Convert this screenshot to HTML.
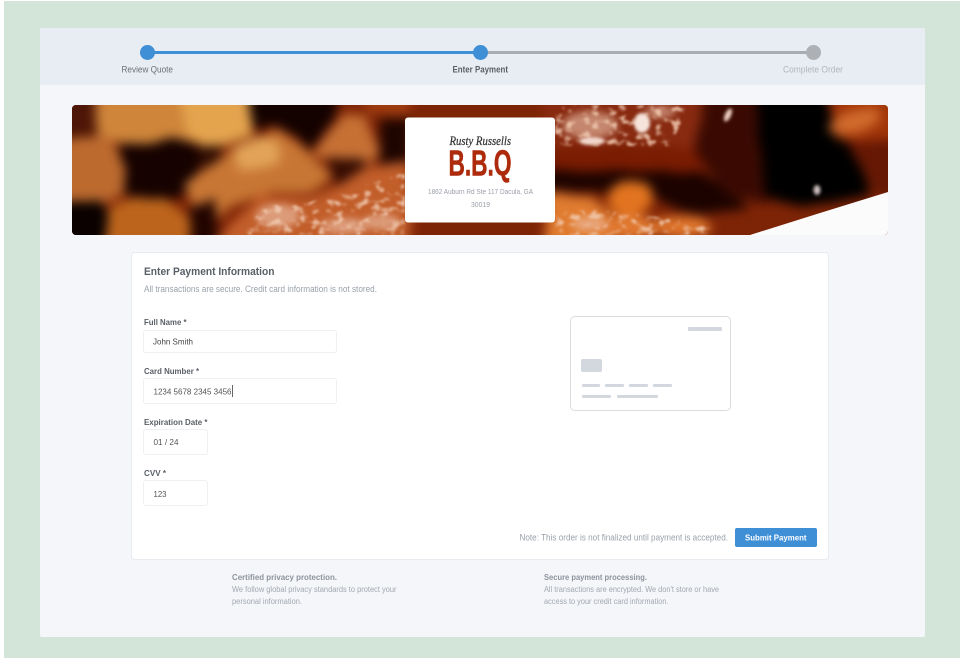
<!DOCTYPE html>
<html lang="en"><head><meta charset="utf-8"><title>Enter Payment</title>
<style>
html,body{margin:0;padding:0;width:960px;height:664px;overflow:hidden;background:#fff;font-family:"Liberation Sans",sans-serif}
div{position:absolute;box-sizing:border-box}
.in{background:#fff;border:1px solid #eef0f3;border-radius:3px}
.g{background:#d3d8de;border-radius:1px}
svg{position:absolute;left:0;top:0}
text{font-family:"Liberation Sans",sans-serif}
</style></head><body>
<div style="left:4px;top:1px;width:956px;height:657px;background:#d3e5d9"></div>
<div style="left:40px;top:28px;width:885px;height:609px;background:#f4f6f9;border-radius:2px"></div>
<div style="left:40px;top:28px;width:885px;height:57px;background:#e8edf3;border-radius:2px 2px 0 0"></div>
<div style="left:147px;top:50.5px;width:333px;height:3px;background:#3f8fd6"></div>
<div style="left:480px;top:50.5px;width:333px;height:3px;background:#a9adb2"></div>
<div style="left:139.5px;top:44.5px;width:15px;height:15px;border-radius:50%;background:#3f8fd6"></div>
<div style="left:472.5px;top:44.5px;width:15px;height:15px;border-radius:50%;background:#3f8fd6"></div>
<div style="left:805.5px;top:44.5px;width:15px;height:15px;border-radius:50%;background:#adb0b5"></div>

<svg width="960" height="664" viewBox="0 0 960 664">
<defs>
<clipPath id="c"><rect x="72" y="105" width="816" height="130" rx="4"/></clipPath>
<filter id="org" filterUnits="userSpaceOnUse" x="40" y="80" width="880" height="180" color-interpolation-filters="sRGB">
<feTurbulence type="fractalNoise" baseFrequency=".03" numOctaves="1" seed="7" result="n"/>
<feDisplacementMap in="SourceGraphic" in2="n" scale="10" xChannelSelector="R" yChannelSelector="G" result="d"/>
<feGaussianBlur in="d" stdDeviation="5.5"/>
</filter>
<filter id="sp" filterUnits="userSpaceOnUse" x="40" y="80" width="880" height="180" color-interpolation-filters="sRGB">
<feTurbulence type="fractalNoise" baseFrequency=".11 .15" numOctaves="2" seed="4" result="n"/>
<feColorMatrix in="n" type="matrix" values="0 0 0 0 .95  0 0 0 0 .80  0 0 0 0 .70  5 0 0 0 -2.6"/>
<feComposite in2="SourceAlpha" operator="in"/>
<feGaussianBlur stdDeviation="1"/>
</filter>
<filter id="b2" x="-50%" y="-50%" width="200%" height="200%"><feGaussianBlur stdDeviation="1.5"/></filter>
<filter id="b4" filterUnits="userSpaceOnUse" x="40" y="80" width="880" height="180"><feGaussianBlur stdDeviation="4"/></filter>
</defs>
<g clip-path="url(#c)">
<rect x="72" y="105" width="816" height="130" fill="#7a2206"/>
<g filter="url(#org)">
<rect x="50" y="85" width="860" height="170" fill="#7e2406"/>
<rect x="50" y="85" width="55" height="55" fill="#4e1606"/>
<polygon points="95,95 190,95 192,145 125,147 98,140" fill="#cf853a"/>
<polygon points="118,146 170,138 199,146 199,194 165,202 122,196" fill="#160200"/>
<polygon points="178,90 256,90 252,136 215,150 190,140" fill="#e4a44e"/>
<polygon points="197,145 219,145 219,165 200,168" fill="#300e02"/>
<polygon points="55,140 105,136 127,170 125,195 105,205 55,205" fill="#bc6a2e"/>
<polygon points="55,203 100,200 110,215 105,250 55,250" fill="#0a0100"/>
<polygon points="104,250 108,212 135,196 165,198 190,218 194,250" fill="#bc641c"/>
<polygon points="249,85 342,85 332,120 310,150 295,135 275,125 255,132" fill="#140200"/>
<polygon points="185,188 212,162 279,128 309,152 332,175 312,192 272,192 232,205 205,228" fill="#c87634"/>
<polygon points="232,150 260,136 280,142 280,165 240,170" fill="#e2a458"/>
<polygon points="312,152 342,115 365,118 379,152 365,168 332,162" fill="#c67034"/>
<polygon points="329,157 365,160 365,178 332,182" fill="#340c02"/>
<rect x="365" y="85" width="45" height="30" fill="#a03c10"/>
<rect x="379" y="118" width="30" height="46" fill="#1e0500"/>
<polygon points="190,208 215,198 216,250 192,250" fill="#220500"/>
<polygon points="205,250 259,195 312,198 365,168 410,160 410,250" fill="#c25e2a"/>

<polygon points="545,85 700,85 700,148 545,148" fill="#882a10"/>
<polygon points="545,146 720,146 720,172 545,172" fill="#7a1c02"/>
<polygon points="545,170 700,172 750,208 700,214 640,194 545,190" fill="#1c0300"/>
<polygon points="705,85 770,85 770,205 725,195 695,150" fill="#3a0a02"/>
<polygon points="755,80 855,80 870,195 800,208 765,195" fill="#000"/>
<polygon points="825,85 915,85 915,140 838,140" fill="#a03408"/>
<ellipse cx="855" cy="122" rx="27" ry="11" transform="rotate(-15 855 122)" fill="#d06a2c"/>
<polygon points="848,140 915,140 915,200 875,195" fill="#661804"/>
<polygon points="545,192 590,197 612,212 612,250 545,250" fill="#e07c30"/>
<ellipse cx="630" cy="198" rx="21" ry="18" fill="#e2741f"/>
<ellipse cx="628" cy="228" rx="32" ry="14" fill="#e07830"/>
<ellipse cx="682" cy="226" rx="28" ry="12" fill="#e0762c"/>
</g>
<g filter="url(#b4)" fill="#eec4ae" opacity=".6">
<ellipse cx="278" cy="216" rx="22" ry="12"/>
<ellipse cx="345" cy="226" rx="24" ry="8"/>
<ellipse cx="382" cy="222" rx="18" ry="8"/>
<ellipse cx="590" cy="125" rx="28" ry="14"/>
<ellipse cx="660" cy="112" rx="16" ry="6"/>
<ellipse cx="590" cy="224" rx="18" ry="7"/>
</g>
<g filter="url(#sp)" opacity=".85">
<polygon points="240,235 265,205 300,205 345,192 405,172 405,235" fill="#000"/>
<polygon points="555,105 690,105 670,146 555,146" fill="#000"/>
<polygon points="555,210 600,210 650,216 710,226 710,235 555,235" fill="#000"/>
</g>
<g filter="url(#b2)">
<ellipse cx="642" cy="123" rx="8" ry="10" fill="#f6e4dc"/>
<ellipse cx="592" cy="141" rx="13" ry="4" fill="#f2d8cc"/>
<ellipse cx="728" cy="115" rx="3" ry="7" transform="rotate(25 728 115)" fill="#f0d0c4"/>
<ellipse cx="817" cy="190" rx="3.5" ry="5" fill="#cfc0c0"/>
</g>
<polygon points="750,235 820,213 888,192 888,236 750,236" fill="#fbfbfc"/>
</g>
<rect x="405" y="117.5" width="150" height="105" rx="3" fill="#fff"/>
</svg>

<div style="left:131px;top:252px;width:698px;height:308px;background:#fff;border:1px solid #e8ebef;border-radius:4px"></div>
<div class="in" style="left:143px;top:329.5px;width:194px;height:23px"></div>
<div class="in" style="left:143px;top:378px;width:194px;height:26px"></div>
<div class="in" style="left:143px;top:429px;width:65px;height:26px"></div>
<div class="in" style="left:143px;top:480px;width:65px;height:26px"></div>
<div style="left:232px;top:385px;width:1px;height:12px;background:#666"></div>
<div style="left:569.5px;top:316px;width:161.5px;height:95px;background:#fff;border:1.5px solid #d9dde2;border-radius:5px"></div>
<div class="g" style="left:688px;top:327px;width:34px;height:4px"></div>
<div class="g" style="left:581px;top:359px;width:20.5px;height:13px;border-radius:2px"></div>
<div class="g" style="left:581.5px;top:384px;width:18.5px;height:2.5px"></div>
<div class="g" style="left:605px;top:384px;width:19px;height:2.5px"></div>
<div class="g" style="left:629px;top:384px;width:19px;height:2.5px"></div>
<div class="g" style="left:653px;top:384px;width:18.5px;height:2.5px"></div>
<div class="g" style="left:581.5px;top:395px;width:29.5px;height:2.5px"></div>
<div class="g" style="left:617px;top:395px;width:41px;height:2.5px"></div>
<div style="left:735px;top:528px;width:81.5px;height:19px;background:#3f8fd6;border-radius:2px"></div>

<svg width="960" height="664" viewBox="0 0 960 664">
<text x="121.5" y="72.5" font-size="9" fill="#6a7079" textLength="51.5" lengthAdjust="spacingAndGlyphs">Review Quote</text>
<text x="452.5" y="72.5" font-size="9" font-weight="bold" fill="#5a5f67" textLength="55.5" lengthAdjust="spacingAndGlyphs">Enter Payment</text>
<text x="783" y="72.5" font-size="9" fill="#b2b6bc" textLength="60" lengthAdjust="spacingAndGlyphs">Complete Order</text>

<text x="449.5" y="145" font-size="13" font-style="italic" fill="#333" stroke="#333" stroke-width=".25" style="font-family:'Liberation Serif',serif" textLength="61.5" lengthAdjust="spacingAndGlyphs">Rusty Russells</text>
<text x="448.5" y="175.5" font-size="36" font-weight="bold" fill="#ad2a0c" stroke="#ad2a0c" stroke-width=".6" textLength="63" lengthAdjust="spacingAndGlyphs">B.B.Q</text>
<text x="428" y="194" font-size="7.5" fill="#9a9fa8" textLength="105" lengthAdjust="spacingAndGlyphs">1862 Auburn Rd Ste 117 Dacula, GA</text>
<text x="471" y="207" font-size="7.5" fill="#9a9fa8" textLength="19" lengthAdjust="spacingAndGlyphs">30019</text>

<text x="144" y="275" font-size="11" font-weight="bold" fill="#5a5f67" textLength="130.5" lengthAdjust="spacingAndGlyphs">Enter Payment Information</text>
<text x="144" y="292" font-size="9" fill="#9aa1ab" textLength="233" lengthAdjust="spacingAndGlyphs">All transactions are secure. Credit card information is not stored.</text>

<text x="144" y="325" font-size="8.5" font-weight="bold" fill="#5a5f67" textLength="42.5" lengthAdjust="spacingAndGlyphs">Full Name *</text>
<text x="153" y="344.5" font-size="8.5" fill="#444" textLength="40" lengthAdjust="spacingAndGlyphs">John Smith</text>
<text x="144" y="374" font-size="8.5" font-weight="bold" fill="#5a5f67" textLength="55" lengthAdjust="spacingAndGlyphs">Card Number *</text>
<text x="153.5" y="394.5" font-size="8.5" fill="#555" textLength="78" lengthAdjust="spacingAndGlyphs">1234 5678 2345 3456</text>
<text x="144" y="425" font-size="8.5" font-weight="bold" fill="#5a5f67" textLength="63.5" lengthAdjust="spacingAndGlyphs">Expiration Date *</text>
<text x="153.5" y="445" font-size="8.5" fill="#555" textLength="25" lengthAdjust="spacingAndGlyphs">01 / 24</text>
<text x="144" y="476" font-size="8.5" font-weight="bold" fill="#5a5f67" textLength="22" lengthAdjust="spacingAndGlyphs">CVV *</text>
<text x="153.5" y="497" font-size="8.5" fill="#555" textLength="13" lengthAdjust="spacingAndGlyphs">123</text>

<text x="519.5" y="540.5" font-size="9" fill="#9aa1ab" textLength="208.5" lengthAdjust="spacingAndGlyphs">Note: This order is not finalized until payment is accepted.</text>
<text x="745" y="540.5" font-size="8.5" font-weight="bold" fill="#fff" textLength="61.5" lengthAdjust="spacingAndGlyphs">Submit Payment</text>

<text x="232" y="580" font-size="8.5" font-weight="bold" fill="#8d939d" textLength="105" lengthAdjust="spacingAndGlyphs">Certified privacy protection.</text>
<text x="232" y="592" font-size="8" fill="#a3a8b1" textLength="164.5" lengthAdjust="spacingAndGlyphs">We follow global privacy standards to protect your</text>
<text x="232" y="604" font-size="8" fill="#a3a8b1" textLength="70" lengthAdjust="spacingAndGlyphs">personal information.</text>
<text x="544" y="580" font-size="8.5" font-weight="bold" fill="#8d939d" textLength="103" lengthAdjust="spacingAndGlyphs">Secure payment processing.</text>
<text x="544" y="592" font-size="8" fill="#a3a8b1" textLength="175" lengthAdjust="spacingAndGlyphs">All transactions are encrypted. We don't store or have</text>
<text x="544" y="604" font-size="8" fill="#a3a8b1" textLength="124.5" lengthAdjust="spacingAndGlyphs">access to your credit card information.</text>
</svg>
</body></html>
